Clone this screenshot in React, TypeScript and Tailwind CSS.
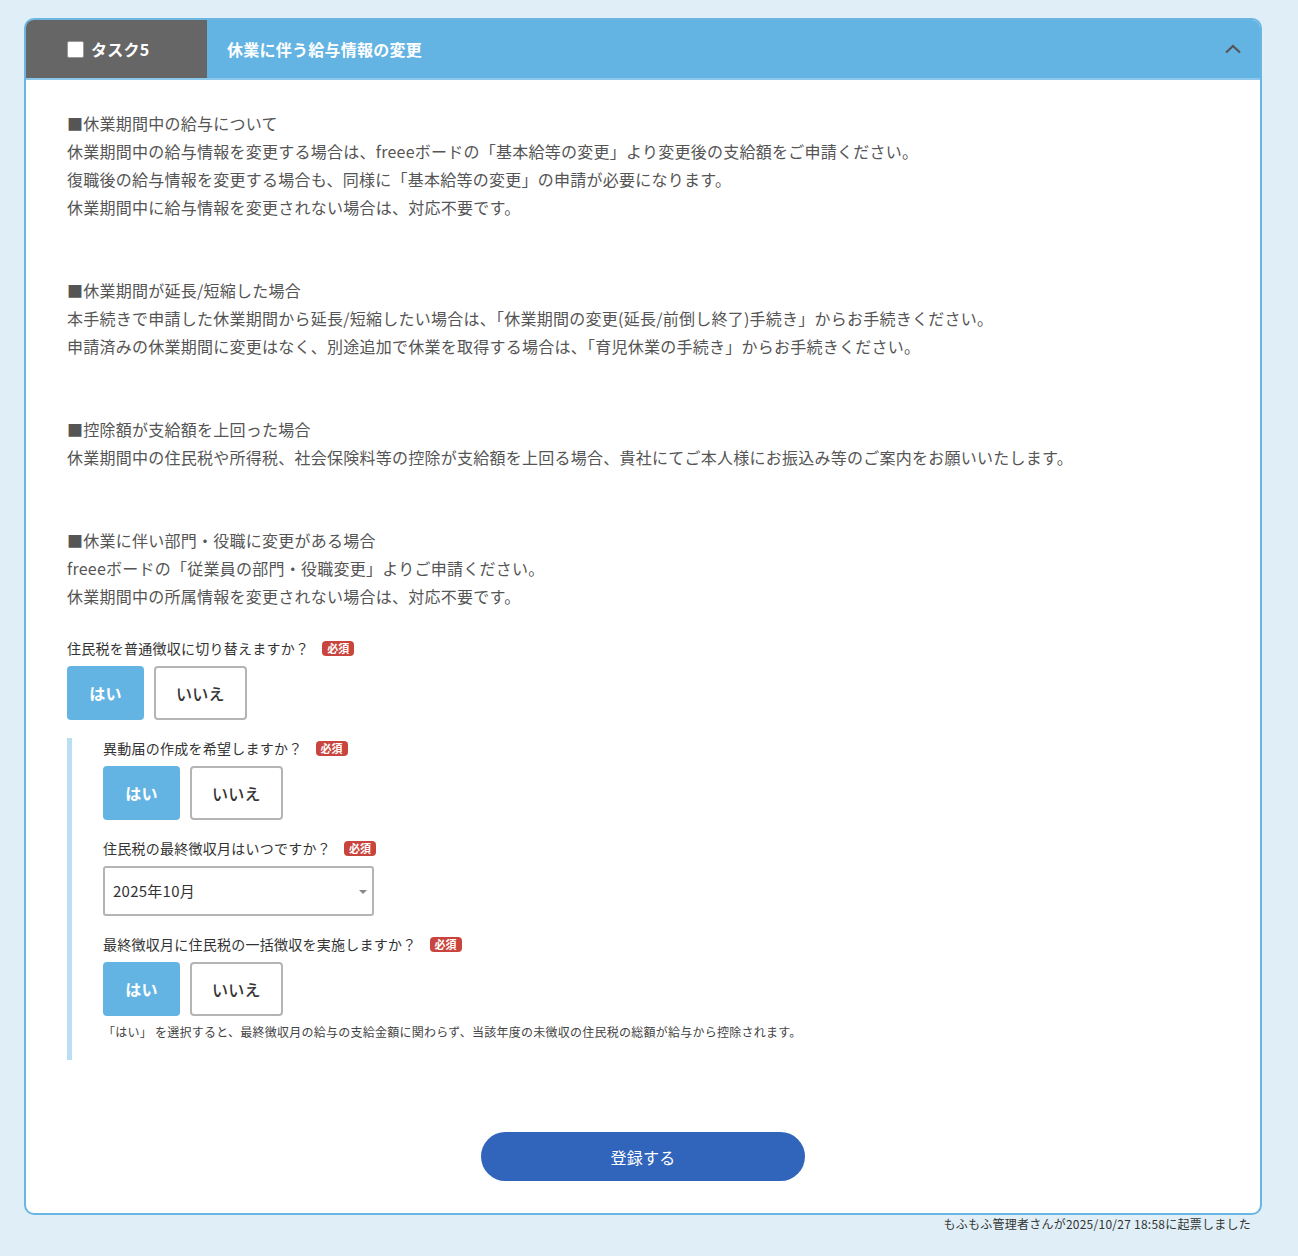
import React from 'react';

const Required: React.FC = () => (
  <span className="ml-[13px] inline-flex h-[15px] items-center rounded-[4px] bg-[#c8443c] px-[5px] text-[11px] font-bold leading-none tracking-normal text-white">
    必須
  </span>
);

const YesNo: React.FC = () => (
  <div className="flex gap-[10px]">
    <button className="h-[54px] w-[77px] rounded-[4px] bg-[#64b4e3] text-[16px] font-bold text-white">はい</button>
    <button className="h-[54px] w-[93px] rounded-[4px] border-2 border-[#b4b4b4] bg-white text-[16px] font-medium text-[#333]">いいえ</button>
  </div>
);

const Label: React.FC<{ children: React.ReactNode }> = ({ children }) => (
  <div className="mb-[8px] flex h-[20px] items-center text-[14px] text-[#333]">
    {children}
    <Required />
  </div>
);

const sections = [
  {
    title: '■休業期間中の給与について',
    lines: [
      '休業期間中の給与情報を変更する場合は、freeeボードの「基本給等の変更」より変更後の支給額をご申請ください。',
      '復職後の給与情報を変更する場合も、同様に「基本給等の変更」の申請が必要になります。',
      '休業期間中に給与情報を変更されない場合は、対応不要です。',
    ],
  },
  {
    title: '■休業期間が延長/短縮した場合',
    lines: [
      '本手続きで申請した休業期間から延長/短縮したい場合は、「休業期間の変更(延長/前倒し終了)手続き」からお手続きください。',
      '申請済みの休業期間に変更はなく、別途追加で休業を取得する場合は、「育児休業の手続き」からお手続きください。',
    ],
  },
  {
    title: '■控除額が支給額を上回った場合',
    lines: [
      '休業期間中の住民税や所得税、社会保険料等の控除が支給額を上回る場合、貴社にてご本人様にお振込み等のご案内をお願いいたします。',
    ],
  },
  {
    title: '■休業に伴い部門・役職に変更がある場合',
    lines: [
      'freeeボードの「従業員の部門・役職変更」よりご申請ください。',
      '休業期間中の所属情報を変更されない場合は、対応不要です。',
    ],
  },
];

export default function App() {
  return (
    <div
      className="min-h-[1256px] bg-[#e0eff7] pt-[18px] tracking-[0.25px]"
      style={{ fontFamily: '"Noto Sans CJK JP", "Noto Sans", sans-serif' }}
    >
      <div className="ml-[24px] w-[1238px] overflow-hidden rounded-[10px] border-2 border-[#6ab6e3] bg-white">
        {/* header */}
        <div className="flex h-[60px] border-b-2 border-[#8cc8ec] bg-[#64b4e3]">
          <div className="flex w-[181px] items-center bg-[#666666] pl-[41px]">
            <span className="h-[17px] w-[17px] rounded-[2px] border border-[#999] bg-white" />
            <span className="ml-[7px] text-[16px] font-bold text-white">タスク5</span>
          </div>
          <div className="flex flex-1 items-center justify-between pl-[20px] pr-[18px]">
            <span className="text-[16px] font-bold text-white">休業に伴う給与情報の変更</span>
            <svg width="18" height="12" viewBox="0 0 18 12" fill="none">
              <path d="M2 9.5 L9 3 L16 9.5" stroke="#555" strokeWidth="2.2" />
            </svg>
          </div>
        </div>

        {/* body */}
        <div className="px-[41px] pb-[32px] pt-[29px]">
          <div className="text-[16px] leading-[28px] text-[#555]">
            {sections.map((s, i) => (
              <div key={i} className={i > 0 ? 'mt-[55px]' : ''}>
                <div>{s.title}</div>
                {s.lines.map((l, j) => (
                  <div key={j}>{l}</div>
                ))}
              </div>
            ))}
          </div>

          <div className="mt-[28px]">
            <Label>住民税を普通徴収に切り替えますか？</Label>
            <YesNo />
          </div>

          <div className="mt-[18px] border-l-[5px] border-[#b8e0f2] pb-[19px] pl-[31px]">
            <Label>異動届の作成を希望しますか？</Label>
            <YesNo />

            <div className="mt-[18px]">
              <Label>住民税の最終徴収月はいつですか？</Label>
              <div className="relative flex h-[50px] w-[271px] items-center rounded-[3px] border-2 border-[#b4b4b4] px-[8px] text-[15px] text-[#333]">
                2025年10月
                <span className="absolute right-[5px] top-[22px] h-0 w-0 border-x-[4px] border-t-[4px] border-x-transparent border-t-[#888]" />
              </div>
            </div>

            <div className="mt-[18px]">
              <Label>最終徴収月に住民税の一括徴収を実施しますか？</Label>
              <YesNo />
              <div className="mt-[7px] text-[12px] leading-[18px] text-[#444]">
                「はい」 を選択すると、最終徴収月の給与の支給金額に関わらず、当該年度の未徴収の住民税の総額が給与から控除されます。
              </div>
            </div>
          </div>

          <div className="mt-[72px] flex justify-center">
            <button className="h-[49px] w-[324px] rounded-full bg-[#3065bb] text-[16px] text-white">登録する</button>
          </div>
        </div>
      </div>
      <div className="ml-[24px] w-[1227px] pt-[2px] text-right text-[12px] leading-[14px] text-[#333]">
        もふもふ管理者さんが2025/10/27 18:58に起票しました
      </div>
    </div>
  );
}
